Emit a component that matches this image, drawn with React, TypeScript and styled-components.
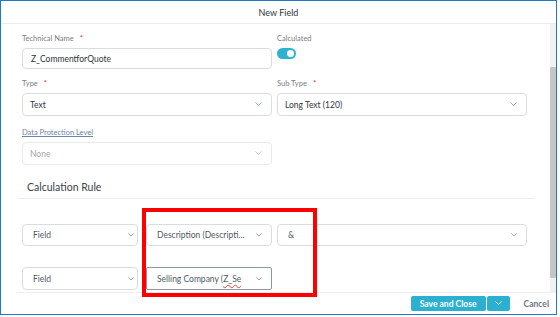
import React from "react";
import styled, { createGlobalStyle } from "styled-components";

const GlobalStyle = createGlobalStyle`
  html, body {
    margin: 0;
    padding: 0;
    background: #ffffff;
  }
  body {
    font-family: Lato, "Liberation Sans", sans-serif;
    color: #32363a;
  }
`;

const Frame = styled.div`
  position: relative;
  box-sizing: border-box;
  width: 557px;
  height: 315px;
  border: 1px solid #1f78c8;
  display: flex;
  flex-direction: column;
  background: #ffffff;
  overflow: hidden;
`;

const Header = styled.div`
  height: 22px;
  flex: 0 0 22px;
  border-bottom: 1px solid #e9ebed;
  display: flex;
  align-items: center;
  justify-content: center;
  font-size: 9px;
  color: #32363a;
`;

const Body = styled.div`
  flex: 1;
  display: flex;
  min-height: 0;
`;

const Content = styled.div`
  flex: 1;
  padding-left: 21px;
`;

const Scrollbar = styled.div`
  width: 6px;
  background: #f1f1f1;
  padding: 43px 0 14px;
  display: flex;
`;

const Thumb = styled.div`
  flex: 1;
  background: #c6c6c6;
  border-radius: 1px;
`;

const FormGrid = styled.div`
  display: grid;
  grid-template-columns: 250px 250px;
  column-gap: 5px;
`;

const Field = styled.div<{ $top: number }>`
  display: flex;
  flex-direction: column;
  margin-top: ${(p) => p.$top}px;
`;

const Label = styled.div<{ $link?: boolean }>`
  font-size: 7.5px;
  line-height: 10px;
  height: 10px;
  margin-bottom: 4px;
  color: ${(p) => (p.$link ? "#6f84a6" : "#7a7d80")};
  text-decoration: ${(p) => (p.$link ? "underline" : "none")};
`;

const Required = styled.span`
  color: #e5322d;
  margin-left: 6px;
`;

const Input = styled.div`
  box-sizing: border-box;
  height: 21px;
  border: 1px solid #d9dde2;
  border-radius: 4px;
  display: flex;
  align-items: center;
  padding-left: 8px;
  font-size: 8.5px;
  color: #32363a;
`;

const Select = styled.div<{
  $w?: number;
  $h?: number;
  $pad?: number;
  $padR?: number;
  $disabled?: boolean;
  $focus?: boolean;
  $muted?: boolean;
}>`
  box-sizing: border-box;
  width: ${(p) => (p.$w ? `${p.$w}px` : "auto")};
  height: ${(p) => p.$h ?? 23}px;
  border: 1px solid ${(p) => (p.$focus ? "#8d98a3" : p.$disabled ? "#e7e9eb" : "#d9dde2")};
  border-radius: ${(p) => (p.$focus ? 2 : 4)}px;
  display: flex;
  align-items: center;
  justify-content: space-between;
  padding: 0 ${(p) => p.$padR ?? 9}px 0 ${(p) => p.$pad ?? 7}px;
  font-size: 8.5px;
  color: ${(p) => (p.$disabled ? "#a3a6a9" : p.$muted ? "#4f5a66" : "#32363a")};
  flex-shrink: 0;
  white-space: nowrap;
`;

const Toggle = styled.div`
  width: 19px;
  height: 11px;
  border-radius: 6px;
  background: #2db3d1;
  display: flex;
  align-items: center;
  justify-content: flex-end;
  padding-right: 2px;
  box-sizing: border-box;
`;

const Knob = styled.div`
  width: 7px;
  height: 7px;
  border-radius: 50%;
  background: #ffffff;
`;

const Heading = styled.div`
  margin: 15px 0 0 -5px;
  padding: 0 0 4px 10px;
  width: 508px;
  font-size: 10.5px;
  line-height: 14px;
  color: #3e4246;
  border-bottom: 1px solid #eceef0;
`;

const RuleRow = styled.div<{ $top: number }>`
  display: flex;
  margin-top: ${(p) => p.$top}px;
`;

const Spell = styled.span`
  text-decoration: underline wavy #e0413a;
  text-decoration-thickness: 1px;
  text-underline-offset: 2px;
`;

const Footer = styled.div`
  flex: 0 0 21px;
  height: 21px;
  border-top: 1px solid #eceef0;
  margin-left: 15px;
  display: flex;
  align-items: center;
  justify-content: flex-end;
  padding-right: 7px;
`;

const PrimaryButton = styled.div<{ $w: number }>`
  box-sizing: border-box;
  width: ${(p) => p.$w}px;
  height: 15px;
  background: #2bb1cf;
  color: #ffffff;
  font-size: 8.5px;
  font-weight: 700;
  display: flex;
  align-items: center;
  justify-content: center;
  border-radius: 2px;
  margin-right: 1px;
`;

const CancelButton = styled.div`
  margin-left: 13px;
  font-size: 8.5px;
  font-weight: 700;
  color: #6a7886;
`;

const Annotation = styled.div`
  position: absolute;
  left: 141px;
  top: 207px;
  width: 175px;
  height: 89px;
  box-sizing: border-box;
  border: 4px solid #ff0000;
  pointer-events: none;
`;

const Chevron: React.FC<{ color?: string; size?: number }> = ({ color = "#8aa3bf", size = 7 }) => (
  <svg width={size} height={size * 0.6} viewBox="0 0 10 6" fill="none">
    <polyline points="1,1 5,5 9,1" stroke={color} strokeWidth="1.2" strokeLinecap="round" strokeLinejoin="round" />
  </svg>
);

export default function App(): React.ReactElement {
  return (
    <>
      <GlobalStyle />
      <Frame>
        <Header>New Field</Header>
        <Body>
          <Content>
            <FormGrid>
              <Field $top={10}>
                <Label>
                  Technical Name<Required>*</Required>
                </Label>
                <Input>Z_CommentforQuote</Input>
              </Field>
              <Field $top={10}>
                <Label>Calculated</Label>
                <Toggle>
                  <Knob />
                </Toggle>
              </Field>
              <Field $top={10}>
                <Label>
                  Type<Required>*</Required>
                </Label>
                <Select>
                  Text
                  <Chevron />
                </Select>
              </Field>
              <Field $top={10}>
                <Label>
                  Sub Type<Required>*</Required>
                </Label>
                <Select>
                  Long Text (120)
                  <Chevron />
                </Select>
              </Field>
              <Field $top={12}>
                <Label $link>Data Protection Level</Label>
                <Select $disabled>
                  None
                  <Chevron color="#b9c6d4" />
                </Select>
              </Field>
            </FormGrid>
            <Heading>Calculation Rule</Heading>
            <RuleRow $top={25}>
              <Select $w={116} $h={22} $pad={10} $padR={3} $muted>
                Field
                <Chevron color="#7d8287" size={6} />
              </Select>
              <Select $w={126} $h={22} $pad={10} $muted style={{ marginLeft: 8 }}>
                Description (Descripti...
                <Chevron color="#7d8287" size={6} />
              </Select>
              <Select $w={250} $h={22} $pad={10} $muted style={{ marginLeft: 5 }}>
                &amp;
                <Chevron color="#7d8287" size={6} />
              </Select>
            </RuleRow>
            <RuleRow $top={21}>
              <Select $w={116} $h={23} $pad={10} $padR={3} $muted>
                Field
                <Chevron color="#7d8287" size={6} />
              </Select>
              <Select $w={126} $h={23} $pad={10} $muted $focus style={{ marginLeft: 8 }}>
                <span>
                  Selling Company (<Spell>Z_Se</Spell>
                </span>
                <Chevron color="#7d8287" size={6} />
              </Select>
            </RuleRow>
          </Content>
          <Scrollbar>
            <Thumb />
          </Scrollbar>
        </Body>
        <Footer>
          <PrimaryButton $w={75}>Save and Close</PrimaryButton>
          <PrimaryButton $w={23}>
            <Chevron color="#ffffff" size={7} />
          </PrimaryButton>
          <CancelButton>Cancel</CancelButton>
        </Footer>
        <Annotation />
      </Frame>
    </>
  );
}
